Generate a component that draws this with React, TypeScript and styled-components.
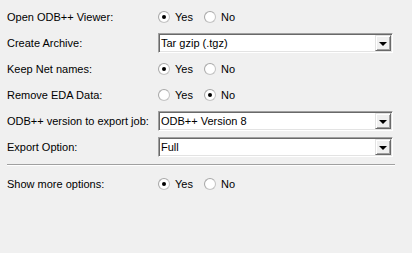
import React from 'react';
import styled, { createGlobalStyle } from 'styled-components';

const GlobalStyle = createGlobalStyle`
  html, body {
    margin: 0;
    padding: 0;
    background: #f0f0f0;
  }
  body {
    font-family: "Liberation Sans", Arial, sans-serif;
    font-size: 11px;
    color: #000;
  }
`;

const Panel = styled.div`
  width: 412px;
  height: 253px;
  padding: 4px 0 0 7px;
  box-sizing: border-box;
`;

const Row = styled.div`
  display: grid;
  grid-template-columns: 151px 235px;
  align-items: center;
  height: 26px;
`;

const Label = styled.span`
  white-space: nowrap;
`;

const Separator = styled.div`
  width: 388px;
  height: 1px;
  background: #a0a0a0;
  border-bottom: 1px solid #ffffff;
  margin: 4px 0 5px;
`;

const RadioGroup = styled.div`
  display: flex;
  align-items: center;
  gap: 11px;
`;

const RadioItem = styled.label`
  display: flex;
  align-items: center;
  gap: 5px;
`;

const RadioCircle = styled.span<{ $checked: boolean }>`
  width: 12px;
  height: 12px;
  box-sizing: border-box;
  border-radius: 50%;
  border: 1px solid #c4c4c4;
  border-top-color: #a8a8a8;
  border-left-color: #a8a8a8;
  background: radial-gradient(circle at 50% 50%, #ffffff 55%, #eeeeee 100%);
  display: flex;
  align-items: center;
  justify-content: center;

  &::after {
    content: '';
    width: 4px;
    height: 4px;
    border-radius: 50%;
    background: ${(p) => (p.$checked ? '#000' : 'transparent')};
  }
`;

const Select = styled.div`
  height: 20px;
  box-sizing: border-box;
  display: flex;
  align-items: stretch;
  background: #fff;
  border-top: 1px solid #a0a0a0;
  border-left: 1px solid #a0a0a0;
  border-right: 1px solid #ffffff;
  border-bottom: 1px solid #ffffff;
  box-shadow: inset 1px 1px 0 #696969, inset -1px -1px 0 #e3e3e3;
`;

const SelectText = styled.span`
  flex: 1;
  padding: 0 0 0 2px;
  display: flex;
  align-items: center;
  white-space: nowrap;
`;

const DropButton = styled.span`
  width: 16px;
  margin: 1px 1px 1px 0;
  box-sizing: border-box;
  background: #f0f0f0;
  border-top: 1px solid #e3e3e3;
  border-left: 1px solid #e3e3e3;
  border-right: 1px solid #696969;
  border-bottom: 1px solid #696969;
  box-shadow: inset 1px 1px 0 #ffffff, inset -1px -1px 0 #a0a0a0;
  display: flex;
  align-items: center;
  justify-content: center;

  &::after {
    content: '';
    border-left: 4px solid transparent;
    border-right: 4px solid transparent;
    border-top: 4px solid #000;
    margin-top: 1px;
  }
`;

const YesNo = ({ value }: { value: boolean }) => (
  <RadioGroup>
    <RadioItem>
      <RadioCircle $checked={value} />
      Yes
    </RadioItem>
    <RadioItem>
      <RadioCircle $checked={!value} />
      No
    </RadioItem>
  </RadioGroup>
);

const Dropdown = ({ text }: { text: string }) => (
  <Select>
    <SelectText>{text}</SelectText>
    <DropButton />
  </Select>
);

export default function App() {
  return (
    <>
      <GlobalStyle />
      <Panel>
        <Row>
          <Label>Open ODB++ Viewer:</Label>
          <YesNo value={true} />
        </Row>
        <Row>
          <Label>Create Archive:</Label>
          <Dropdown text="Tar gzip (.tgz)" />
        </Row>
        <Row>
          <Label>Keep Net names:</Label>
          <YesNo value={true} />
        </Row>
        <Row>
          <Label>Remove EDA Data:</Label>
          <YesNo value={false} />
        </Row>
        <Row>
          <Label>ODB++ version to export job:</Label>
          <Dropdown text="ODB++ Version 8" />
        </Row>
        <Row>
          <Label>Export Option:</Label>
          <Dropdown text="Full" />
        </Row>
        <Separator />
        <Row>
          <Label>Show more options:</Label>
          <YesNo value={true} />
        </Row>
      </Panel>
    </>
  );
}
